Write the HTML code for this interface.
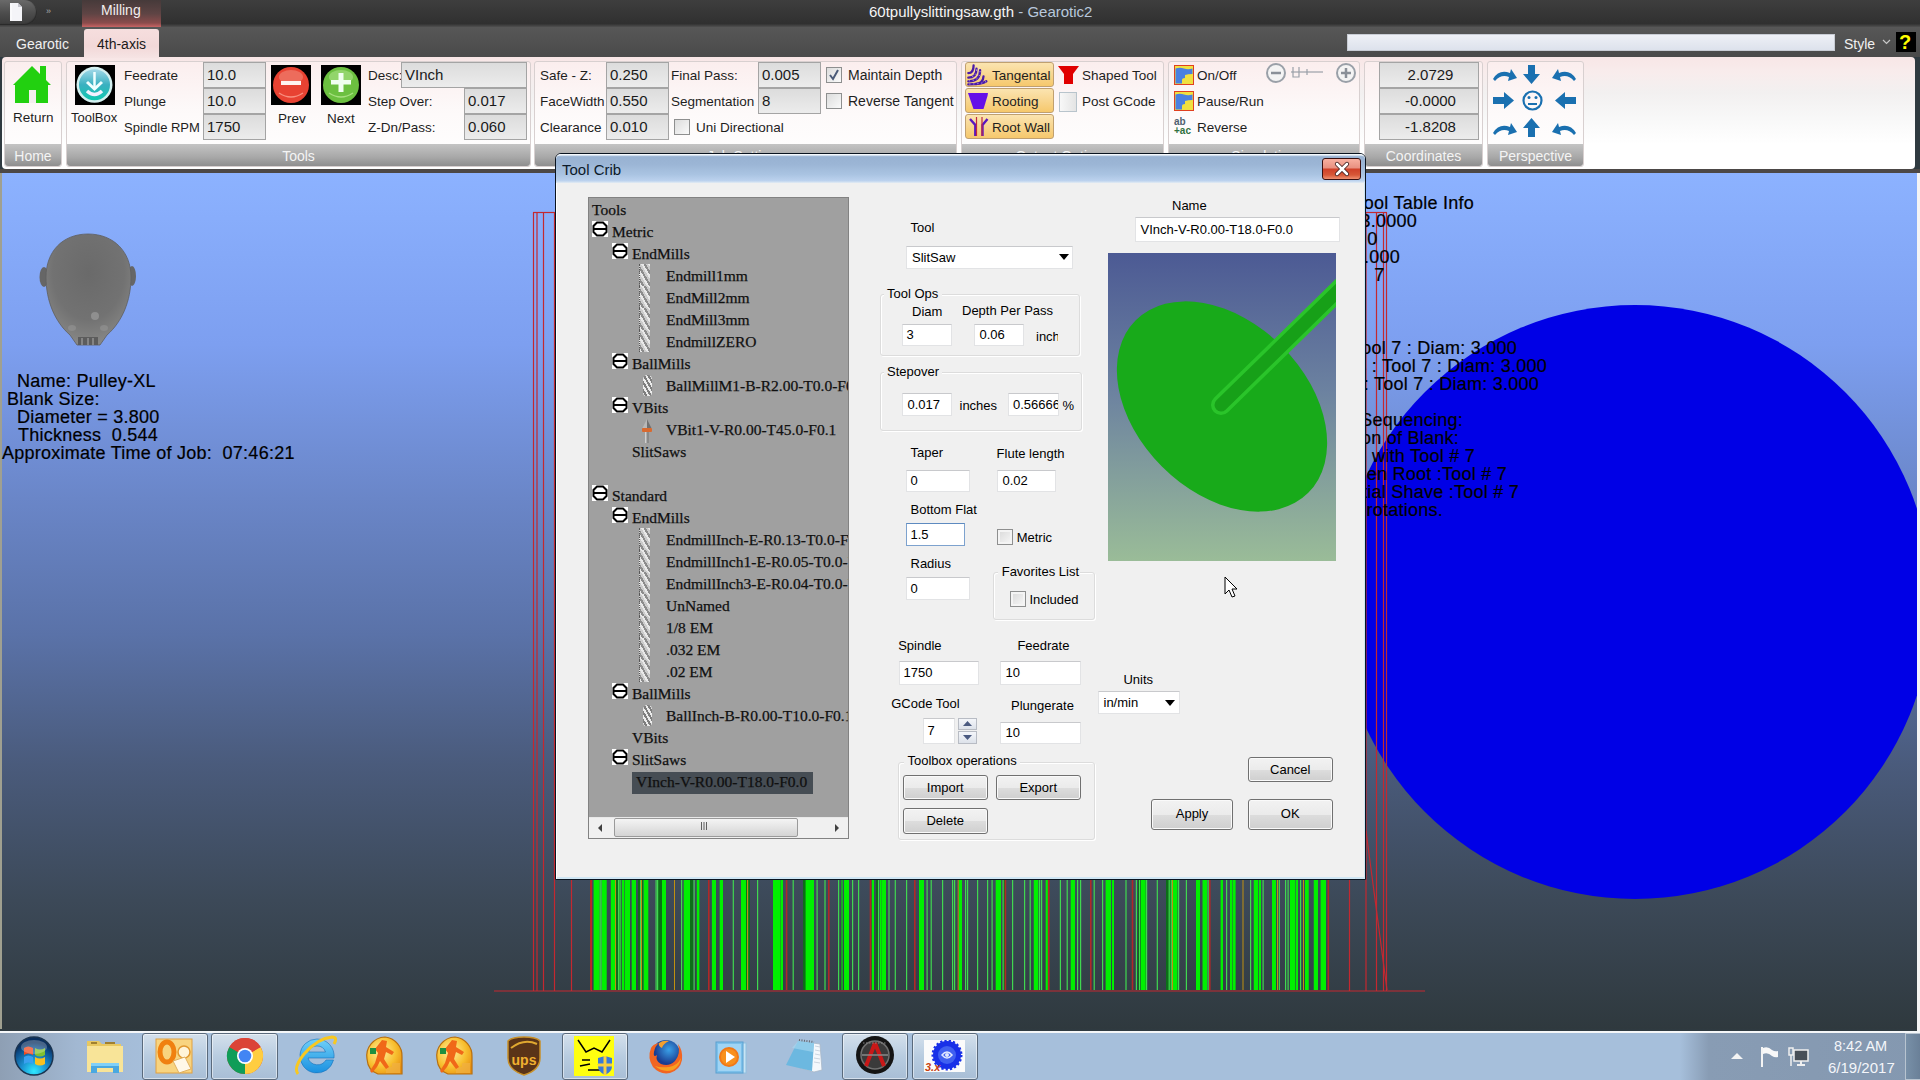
<!DOCTYPE html>
<html><head><meta charset="utf-8">
<style>
*{margin:0;padding:0;box-sizing:border-box}
html,body{width:1920px;height:1080px;overflow:hidden;background:#2f3a40}
body{position:relative;font-family:"Liberation Sans",sans-serif;font-size:14px;color:#1e1e1e}
.a{position:absolute}
.t{position:absolute;white-space:nowrap;line-height:1}
/* title bar */
#titlebar{left:0;top:0;width:1920px;height:27px;background:linear-gradient(#3e3e3e,#303030 88%,#505050)}
#tabrow{left:0;top:27px;width:1920px;height:30px;background:linear-gradient(#575757,#4a4a4a)}
#ribbon{left:2px;top:57px;width:1913px;height:112px;background:linear-gradient(#f8e6e6 0,#f8ecec 14%,#f2f0f0 32%,#f8f8f8 55%,#ffffff 78%);border-radius:4px}
.grp{position:absolute;top:4px;height:106px;border:1px solid #d8d0d0;border-radius:3px;background:linear-gradient(#fbeeee,#fdfafa 50%,#fff)}
.gft{position:absolute;left:0;right:0;bottom:0;height:22px;background:linear-gradient(#c4c4c4,#a8a8a8 60%,#8e8e8e);color:#f4f4f4;font-size:14px;text-align:center;line-height:24px;border-radius:0 0 3px 3px}
.tb{position:absolute;height:26px;border:1px solid #a4a4a4;background:linear-gradient(#dcdcdc,#ececec);font-size:15px;line-height:24px;padding-left:3px;color:#1a1a1a}
#canvas{left:0;top:173px;width:1917px;height:856px;background:linear-gradient(#8cb2ff 0%,#7d9ff0 20%,#6a86c8 38%,#5a72a8 54%,#4a5b7c 69%,#3c4958 85%,#2f393e 100%);border-left:2px solid #a0a090}
#taskbar{left:0;top:1031px;width:1920px;height:49px;background:linear-gradient(90deg,#8e9fb4 0,#a2b8d2 4%,#a6bfdb 8%,#a6bfdb 87.5%,#889cb4 89%,#8498b0 100%);border-top:2px solid #f4f6f8}
</style></head>
<body>
<div id="titlebar" class="a"></div>
<div id="tabrow" class="a"></div>
<div id="ribbon" class="a"></div>

<!-- TITLE -->
<div class="a" style="left:0;top:0;width:37px;height:25px;border-radius:0 13px 13px 0;background:linear-gradient(#6a6a6a,#4e4e4e 50%,#3a3a3a);box-shadow:inset -1px -1px 1px #2a2a2a"></div>
<svg class="a" style="left:8px;top:2px" width="16" height="20" viewBox="0 0 16 20"><path d="M2 1h8l4 4v14H2z" fill="#f4f4f8"/><path d="M10 1v4h4" fill="#c8c8d0"/><path d="M3 2v16" stroke="#fff" stroke-width="1"/></svg>
<div class="t" style="left:46px;top:7px;font-size:9px;color:#aaa;letter-spacing:-1px">»</div>
<div class="a" style="left:82px;top:0;width:79px;height:27px;background:linear-gradient(#463a3a,#5e4444 50%,#8a4c4c 85%,#c86464)"></div>
<div class="t" style="left:101px;top:3px;font-size:14px;color:#f4eeee">Milling</div>
<div class="t" style="left:869px;top:4.3px;font-size:15px;color:#f4f4f4">60tpullyslittingsaw.gth <span style="color:#b8c8dc">- Gearotic2</span></div>
<!-- TABS -->
<div class="t" style="left:16px;top:37px;font-size:14px;color:#f0f0f0">Gearotic</div>
<div class="a" style="left:84px;top:29px;width:75px;height:29px;border-radius:3px 3px 0 0;background:linear-gradient(#f6dede,#f2d8d8 60%,#f6e4e4)"></div>
<div class="t" style="left:97px;top:37px;font-size:14px;color:#1a1a1a">4th-axis</div>
<div class="a" style="left:1347px;top:34px;width:488px;height:17px;background:linear-gradient(#eef0f6,#dde2ec);border:1px solid #c8ccd4"></div>
<div class="t" style="left:1844px;top:37px;font-size:14px;color:#f0f0f0">Style</div>
<svg class="a" style="left:1882px;top:39px" width="9" height="6"><path d="M1 1l3.5 3.5L8 1" stroke="#c8c8c8" stroke-width="1.2" fill="none"/></svg>
<div class="a" style="left:1896px;top:32px;width:20px;height:20px;background:#000"></div>
<div class="t" style="left:1899px;top:32px;font-size:20px;font-weight:bold;color:#ffff00">?</div>

<div class="grp" style="left:4px;top:61px;width:58px;height:106px"><div class="gft">Home</div></div>
<div class="grp" style="left:66px;top:61px;width:465px;height:106px"><div class="gft">Tools</div></div>
<div class="grp" style="left:534px;top:61px;width:423px;height:106px"><div class="gft">Job Settings</div></div>
<div class="grp" style="left:961px;top:61px;width:203px;height:106px"><div class="gft">Output Options</div></div>
<div class="grp" style="left:1168px;top:61px;width:192px;height:106px"><div class="gft">Simulation</div></div>
<div class="grp" style="left:1364px;top:61px;width:119px;height:106px"><div class="gft">Coordinates</div></div>
<div class="grp" style="left:1487px;top:61px;width:97px;height:106px"><div class="gft">Perspective</div></div>
<svg class="a" style="left:12px;top:65px" width="40" height="40" viewBox="0 0 40 40"><path d="M20 1 L1 20 L3 20 L3 38 L36 38 L36 20 L39 20 L34 15 L34 1 L28 1 L28 9 Z" fill="#22d010"/><rect x="17" y="25" width="7" height="13" fill="#f2eeee"/></svg>
<div class="t" style="left:13px;top:110.6px;font-size:13.5px;color:#1e1e1e;">Return</div>
<div class="a" style="left:75px;top:65px;width:40px;height:40px;background:#000"></div><svg class="a" style="left:75px;top:65px" width="40" height="40" viewBox="0 0 40 40"><defs><linearGradient id="tbg" x1="0" y1="0" x2="0" y2="1"><stop offset="0" stop-color="#a0d8e8"/><stop offset=".5" stop-color="#3ab0c0"/><stop offset="1" stop-color="#10c8b0"/></linearGradient></defs><circle cx="19.5" cy="19.8" r="18" fill="#d4f0f0"/><circle cx="19.5" cy="19.8" r="15.5" fill="url(#tbg)"/><path d="M19.5 7V23" stroke="#f0ffff" stroke-width="2.5"/><path d="M12 17L19.5 24L27 17" stroke="#f0ffff" stroke-width="3" fill="none"/><path d="M12 26Q19.5 33 27 26" stroke="#f4f0ff" stroke-width="3.5" fill="none"/></svg>
<div class="t" style="left:71px;top:111.0px;font-size:13px;color:#1e1e1e;">ToolBox</div>
<div class="t" style="left:124px;top:68.6px;font-size:13.5px;color:#1e1e1e;">Feedrate</div>
<div class="t" style="left:124px;top:94.6px;font-size:13.5px;color:#1e1e1e;">Plunge</div>
<div class="t" style="left:124px;top:121.0px;font-size:13px;color:#1e1e1e;">Spindle RPM</div>
<div class="tb" style="left:203px;top:62px;width:63px;height:26px;text-align:left;padding-left:3px;">10.0</div>
<div class="tb" style="left:203px;top:88px;width:63px;height:26px;text-align:left;padding-left:3px;">10.0</div>
<div class="tb" style="left:203px;top:114px;width:63px;height:26px;text-align:left;padding-left:3px;">1750</div>
<div class="a" style="left:271px;top:65px;width:40px;height:40px;background:#000"></div><svg class="a" style="left:271px;top:65px" width="40" height="40" viewBox="0 0 40 40"><circle cx="20" cy="20" r="18" fill="#e84232"/><ellipse cx="20" cy="12" rx="12" ry="7" fill="#f4a090" opacity=".45"/><rect x="10" y="16" width="20" height="4" fill="#fff4f0"/><path d="M8 28q12 8 24 0" stroke="#f89080" stroke-width="1.5" fill="none"/></svg>
<div class="t" style="left:278px;top:111.6px;font-size:13.5px;color:#1e1e1e;">Prev</div>
<div class="a" style="left:321px;top:65px;width:40px;height:40px;background:#000"></div><svg class="a" style="left:321px;top:65px" width="40" height="40" viewBox="0 0 40 40"><circle cx="20" cy="20" r="18" fill="#6cc040"/><ellipse cx="20" cy="12" rx="12" ry="7" fill="#c0f0a0" opacity=".45"/><rect x="10" y="15" width="20" height="4.5" fill="#f0fff0"/><rect x="17.5" y="8" width="5" height="19" fill="#f0fff0"/><path d="M8 28q12 8 24 0" stroke="#a8e080" stroke-width="1.5" fill="none"/></svg>
<div class="t" style="left:327px;top:111.6px;font-size:13.5px;color:#1e1e1e;">Next</div>
<div class="t" style="left:368px;top:68.6px;font-size:13.5px;color:#1e1e1e;">Desc:</div>
<div class="t" style="left:368px;top:94.6px;font-size:13.5px;color:#1e1e1e;">Step Over:</div>
<div class="t" style="left:368px;top:120.6px;font-size:13.5px;color:#1e1e1e;">Z-Dn/Pass:</div>
<div class="tb" style="left:401px;top:62px;width:126px;height:26px;text-align:left;padding-left:3px;">VInch</div>
<div class="tb" style="left:464px;top:88px;width:63px;height:26px;text-align:left;padding-left:3px;">0.017</div>
<div class="tb" style="left:464px;top:114px;width:63px;height:26px;text-align:left;padding-left:3px;">0.060</div>
<div class="t" style="left:540px;top:68.6px;font-size:13.5px;color:#1e1e1e;">Safe - Z:</div>
<div class="t" style="left:540px;top:94.6px;font-size:13.5px;color:#1e1e1e;">FaceWidth</div>
<div class="t" style="left:540px;top:120.6px;font-size:13.5px;color:#1e1e1e;">Clearance</div>
<div class="tb" style="left:606px;top:62px;width:63px;height:26px;text-align:left;padding-left:3px;">0.250</div>
<div class="tb" style="left:606px;top:88px;width:63px;height:26px;text-align:left;padding-left:3px;">0.550</div>
<div class="tb" style="left:606px;top:114px;width:63px;height:26px;text-align:left;padding-left:3px;">0.010</div>
<div class="t" style="left:671px;top:68.6px;font-size:13.5px;color:#1e1e1e;">Final Pass:</div>
<div class="t" style="left:671px;top:94.6px;font-size:13.5px;color:#1e1e1e;">Segmentation</div>
<div class="tb" style="left:758px;top:62px;width:63px;height:26px;text-align:left;padding-left:3px;">0.005</div>
<div class="tb" style="left:758px;top:88px;width:63px;height:26px;text-align:left;padding-left:3px;">8</div>
<div class="a" style="left:674px;top:119px;width:16px;height:16px;border:1px solid #8e8f8f;background:linear-gradient(135deg,#dcdcdc,#fafafa)"></div>
<div class="t" style="left:696px;top:120.6px;font-size:13.5px;color:#1e1e1e;">Uni Directional</div>
<div class="a" style="left:826px;top:67px;width:16px;height:16px;border:1px solid #8e8f8f;background:linear-gradient(135deg,#dcdcdc,#fafafa)"></div><svg class="a" style="left:826px;top:67px" width="16" height="16"><path d="M4 8l3 4 5-9" stroke="#4a5a78" stroke-width="2" fill="none"/></svg>
<div class="t" style="left:848px;top:68.1px;font-size:14px;color:#1e1e1e;">Maintain Depth</div>
<div class="a" style="left:826px;top:93px;width:16px;height:16px;border:1px solid #8e8f8f;background:linear-gradient(135deg,#dcdcdc,#fafafa)"></div>
<div class="t" style="left:848px;top:94.1px;font-size:14px;color:#1e1e1e;">Reverse Tangent</div>
<div class="a" style="left:965px;top:62px;width:89px;height:25px;border:1px solid #c0a070;border-radius:3px;background:linear-gradient(#fbe4b0,#f8d690 50%,#f6c86c)"></div>
<div class="a" style="left:965px;top:88px;width:89px;height:25px;border:1px solid #c0a070;border-radius:3px;background:linear-gradient(#fbe4b0,#f8d690 50%,#f6c86c)"></div>
<div class="a" style="left:965px;top:114px;width:89px;height:25px;border:1px solid #c0a070;border-radius:3px;background:linear-gradient(#fbe4b0,#f8d690 50%,#f6c86c)"></div>
<svg class="a" style="left:962px;top:60px" width="30" height="30" viewBox="0 0 30 30"><g stroke="#4a1aa8" stroke-width="2.3" fill="none" stroke-linecap="round"><path d="M11.6 5.4Q11.6 13.1 6.3 13.1"/><path d="M14.5 8.7Q14.5 17.7 6.3 17.7"/><path d="M18.1 10.2Q18.1 21.3 6.3 21.3"/><path d="M21.5 16.5Q21 23.5 14 24"/><path d="M24.4 21.3Q20 24.4 6.3 24.4"/></g><g stroke="#c8b0f4" stroke-width="0.9" fill="none" stroke-dasharray="1.2 2.8"><path d="M14.5 9.5Q14.5 17.2 7 17.2"/><path d="M18.1 11Q18.1 20.8 7 20.8"/><path d="M24 21.5Q20 24 7 24"/></g></svg><div class="t" style="left:992px;top:68.6px;font-size:13.5px;color:#1e1e1e;">Tangental</div>
<svg class="a" style="left:962px;top:88px" width="30" height="26" viewBox="0 0 30 26"><path d="M6 5H26L25.5 8L21.5 21H11.5L7 8Z" fill="#6410e8"/></svg><div class="t" style="left:992px;top:94.6px;font-size:13.5px;color:#1e1e1e;">Rooting</div>
<svg class="a" style="left:962px;top:114px" width="30" height="26" viewBox="0 0 30 26"><g stroke="#5a18c0" stroke-width="2.4" fill="none"><path d="M8 5L13.3 11V22"/><path d="M25.5 5L20.5 11V22"/></g><path d="M14.5 3V22M20 3V22" stroke="#c02840" stroke-width="1.2"/></svg><div class="t" style="left:992px;top:120.6px;font-size:13.5px;color:#1e1e1e;">Root Wall</div>
<svg class="a" style="left:1058px;top:65px" width="21" height="20" viewBox="0 0 21 20"><path d="M0 1h21l-6 8v10H6V9z" fill="#e00000"/></svg><div class="t" style="left:1082px;top:68.6px;font-size:13.5px;color:#1e1e1e;">Shaped Tool</div>
<div class="a" style="left:1059px;top:92px;width:18px;height:20px;border:1px solid #b8c4cc;background:linear-gradient(90deg,#f8f8f8,#e4e4e4)"></div><div class="t" style="left:1082px;top:94.6px;font-size:13.5px;color:#1e1e1e;">Post GCode</div>
<svg class="a" style="left:1174px;top:65px" width="20" height="20" viewBox="0 0 20 20"><rect x="0.5" y="0.5" width="19" height="19" fill="#f0e040" stroke="#e04020"/><path d="M1.5 3.5Q6 2 10 3.5T18.5 3.5V9Q14 9 11 10V13Q8 13 8 15V18.5H1.5Z" fill="#4a80e0"/></svg>
<div class="t" style="left:1197px;top:68.6px;font-size:13.5px;color:#1e1e1e;">On/Off</div>
<svg class="a" style="left:1174px;top:91px" width="20" height="20" viewBox="0 0 20 20"><rect x="0.5" y="0.5" width="19" height="19" fill="#f0e040" stroke="#e04020"/><path d="M1.5 3.5Q6 2 10 3.5T18.5 3.5V9Q14 9 11 10V13Q8 13 8 15V18.5H1.5Z" fill="#4a80e0"/></svg>
<div class="t" style="left:1197px;top:94.6px;font-size:13.5px;color:#1e1e1e;">Pause/Run</div>
<div class="t" style="left:1174px;top:117px;font-size:10px;color:#506070;font-weight:bold;line-height:9px">ab<br><span style="color:#307040">+ac</span></div><div class="t" style="left:1197px;top:120.6px;font-size:13.5px;color:#1e1e1e;">Reverse</div>
<svg class="a" style="left:1264px;top:61px" width="95" height="24" viewBox="0 0 95 24"><circle cx="12" cy="12" r="9" fill="#f4f4f4" stroke="#9aa0a8" stroke-width="2"/><path d="M7 12h10" stroke="#8a9098" stroke-width="2.5"/><circle cx="82" cy="12" r="9" fill="#f4f4f4" stroke="#9aa0a8" stroke-width="2"/><path d="M77 12h10M82 7v10" stroke="#8a9098" stroke-width="2.5"/><path d="M27 11h32" stroke="#9aa0a8" stroke-width="1.2"/><path d="M29 6v10h6V6M43 8v6" stroke="#9aa0a8" stroke-width="1.2" fill="none"/></svg><div class="tb" style="left:1379px;top:62px;width:100px;height:26px;text-align:center;">2.0729</div>
<div class="tb" style="left:1379px;top:88px;width:100px;height:26px;text-align:center;">-0.0000</div>
<div class="tb" style="left:1379px;top:114px;width:100px;height:26px;text-align:center;">-1.8208</div>
<svg class="a" style="left:1490px;top:62px" width="90" height="80" viewBox="0 0 90 80"><g fill="#1a70b0"><path d="M3 17q6-10 17-6l1-4 6 9-9 3 1-4q-8-3-14 4z"/><path d="M38 3h7v9h5l-8.5 10-8.5-10h5z"/><path d="M86 17q-6-10-17-6l-1-4-6 9 9 3-1-4q8-3 14 4z"/><path d="M3 35h11v-5l10 8.5-10 8.5v-5H3z"/><path d="M86 35H75v-5l-10 8.5 10 8.5v-5h11z"/><path d="M3 71q6-10 17-6l1-4 6 9-9 3 1-4q-8-3-14 4z"/><path d="M38 75h7v-9h5l-8.5-10-8.5 10h5z"/><path d="M86 71q-6-10-17-6l-1-4-6 9 9 3-1-4q8-3 14 4z"/></g><circle cx="42.5" cy="38.5" r="9" fill="none" stroke="#1a70b0" stroke-width="2.2"/><circle cx="39" cy="35.5" r="1.5" fill="#1a70b0"/><circle cx="46" cy="35.5" r="1.5" fill="#1a70b0"/><path d="M38 42h9" stroke="#1a70b0" stroke-width="2"/></svg>
<div class="a" style="left:0;top:169px;width:1920px;height:4px;background:#4c4846"></div>
<div id="canvas" class="a"></div>
<svg class="a" style="left:0;top:173px" width="1917" height="856" viewBox="0 173 1917 856"><circle cx="1635" cy="602" r="297" fill="#0000e6"/></svg>
<div class="a" style="left:1917px;top:173px;width:3px;height:858px;background:#f4f4f4"></div>
<svg class="a" style="left:0;top:173px" width="300" height="200" viewBox="0 173 300 200">
<defs><radialGradient id="hg" cx="0.5" cy="0.35" r="0.7"><stop offset="0" stop-color="#6a6a6a"/><stop offset="0.6" stop-color="#727272"/><stop offset="1" stop-color="#8c8c8a"/></radialGradient></defs>
<ellipse cx="44" cy="277" rx="4.5" ry="10" fill="#666"/><ellipse cx="132" cy="276" rx="4" ry="10" fill="#666"/>
<path d="M88 234 C114 234 131 252 131 277 C131 301 122 322 107 335 L100 345 L77 345 L70 335 C55 322 46 301 46 277 C46 252 62 234 88 234 Z" fill="url(#hg)" stroke="#5e5e5e" stroke-width="0.8"/>
<ellipse cx="95" cy="316" rx="4" ry="4" fill="#a4a4a4" opacity=".6"/><ellipse cx="72" cy="328" rx="4" ry="3" fill="#9a9a9a" opacity=".5"/><ellipse cx="104" cy="328" rx="4" ry="3" fill="#9a9a9a" opacity=".5"/><rect x="78" y="337" width="20" height="8" fill="#5c5c5c"/><path d="M82 338v7M88 338v7M93 338v7" stroke="#a0a0a0" stroke-width="1.2"/>
</svg>
<div class="t" style="left:17px;top:372.3px;font-size:18px;color:#000;-webkit-text-stroke:0.2px #000;letter-spacing:0.25px;">Name: Pulley-XL</div>
<div class="t" style="left:7px;top:390.3px;font-size:18px;color:#000;-webkit-text-stroke:0.2px #000;letter-spacing:0.25px;">Blank Size:</div>
<div class="t" style="left:17px;top:408.3px;font-size:18px;color:#000;-webkit-text-stroke:0.2px #000;letter-spacing:0.25px;">Diameter = 3.800</div>
<div class="t" style="left:18px;top:426.3px;font-size:18px;color:#000;-webkit-text-stroke:0.2px #000;letter-spacing:0.25px;">Thickness&nbsp; 0.544</div>
<div class="t" style="left:2px;top:443.8px;font-size:18px;color:#000;-webkit-text-stroke:0.2px #000;letter-spacing:0.25px;">Approximate Time of Job:&nbsp; 07:46:21</div>
<svg class="a" style="left:0;top:0" width="1920" height="1080" viewBox="0 0 1920 1080"><g stroke="#c42830" stroke-width="1.2" fill="none"><path d="M533.5 212.5V991"/><path d="M537 212.5V991"/><path d="M543.5 212.5V991"/><path d="M554.5 212.5V991"/><path d="M533 212.5H560"/><path d="M1349.5 212.5V991"/><path d="M1366 212.5V991"/><path d="M1376.5 212.5V991"/><path d="M1383.5 212.5V991"/><path d="M1386.5 212.5V991"/><path d="M1360 212.5H1387"/><path d="M494 991H1425"/><path d="M571.5 880V991"/><path d="M591.5 880V991"/><path d="M1366 831L1387 990"/></g></svg>
<svg class="a" style="left:0;top:0" width="1920" height="1080" viewBox="0 0 1920 1080"><rect x="599" y="880" width="2.5" height="110" fill="#0c6e18"/><rect x="615.5" y="880" width="5.5" height="110" fill="#0c6e18"/><rect x="638" y="880" width="5" height="110" fill="#0c6e18"/><rect x="657" y="880" width="5" height="110" fill="#0c6e18"/><rect x="690" y="880" width="3" height="110" fill="#0c6e18"/><rect x="746" y="880" width="4" height="110" fill="#0c6e18"/><rect x="803" y="880" width="3" height="110" fill="#0c6e18"/><rect x="876" y="880" width="3" height="110" fill="#0c6e18"/><rect x="1003" y="880" width="2" height="110" fill="#0c6e18"/><rect x="1138" y="880" width="3" height="110" fill="#0c6e18"/><rect x="1166" y="880" width="6" height="110" fill="#0c6e18"/><rect x="593.6" y="880" width="5.7999999999999545" height="110" fill="#00f000"/><rect x="602" y="880" width="4.7000000000000455" height="110" fill="#00f000"/><rect x="610.8" y="880" width="4.2000000000000455" height="110" fill="#00f000"/><rect x="621.8" y="880" width="2.6000000000000227" height="110" fill="#00f000"/><rect x="625" y="880" width="5" height="110" fill="#00f000"/><rect x="631.7" y="880" width="4.2999999999999545" height="110" fill="#00f000"/><rect x="643.6" y="880" width="4.699999999999932" height="110" fill="#00f000"/><rect x="662" y="880" width="4" height="110" fill="#00f000"/><rect x="683.7" y="880" width="6.2999999999999545" height="110" fill="#00f000"/><rect x="696.8" y="880" width="2.6000000000000227" height="110" fill="#00f000"/><rect x="711.9" y="880" width="4.100000000000023" height="110" fill="#00f000"/><rect x="719.7" y="880" width="3.2999999999999545" height="110" fill="#00f000"/><rect x="741" y="880" width="5" height="110" fill="#00f000"/><rect x="773" y="880" width="7.600000000000023" height="110" fill="#00f000"/><rect x="781" y="880" width="2" height="110" fill="#00f000"/><rect x="805.6" y="880" width="8.399999999999977" height="110" fill="#00f000"/><rect x="841.5" y="880" width="1.1000000000000227" height="110" fill="#00f000"/><rect x="844" y="880" width="5" height="110" fill="#00f000"/><rect x="871.8" y="880" width="2.2000000000000455" height="110" fill="#00f000"/><rect x="880" y="880" width="1.7000000000000455" height="110" fill="#00f000"/><rect x="882" y="880" width="4" height="110" fill="#00f000"/><rect x="919" y="880" width="5" height="110" fill="#00f000"/><rect x="959" y="880" width="3" height="110" fill="#00f000"/><rect x="995.7" y="880" width="5.2999999999999545" height="110" fill="#00f000"/><rect x="1033.75" y="880" width="4.650000000000091" height="110" fill="#00f000"/><rect x="1045.7" y="880" width="2.099999999999909" height="110" fill="#00f000"/><rect x="1070.7" y="880" width="4.2999999999999545" height="110" fill="#00f000"/><rect x="1105.6" y="880" width="5.400000000000091" height="110" fill="#00f000"/><rect x="1112" y="880" width="2" height="110" fill="#00f000"/><rect x="1141" y="880" width="4.7000000000000455" height="110" fill="#00f000"/><rect x="1173" y="880" width="4.5" height="110" fill="#00f000"/><rect x="1196" y="880" width="4" height="110" fill="#00f000"/><rect x="1202.5" y="880" width="4.5" height="110" fill="#00f000"/><rect x="1220.6" y="880" width="2.400000000000091" height="110" fill="#00f000"/><rect x="1230" y="880" width="2.5" height="110" fill="#00f000"/><rect x="1233" y="880" width="2.599999999999909" height="110" fill="#00f000"/><rect x="1253.75" y="880" width="4.25" height="110" fill="#00f000"/><rect x="1258.75" y="880" width="2.25" height="110" fill="#00f000"/><rect x="1272" y="880" width="4" height="110" fill="#00f000"/><rect x="1290" y="880" width="5" height="110" fill="#00f000"/><rect x="1295.6" y="880" width="2.400000000000091" height="110" fill="#00f000"/><rect x="1305" y="880" width="3.75" height="110" fill="#00f000"/><rect x="1313.75" y="880" width="4.25" height="110" fill="#00f000"/><rect x="1320.6" y="880" width="5.400000000000091" height="110" fill="#00f000"/><rect x="599.5" y="880" width="1.2" height="110" fill="#40d850"/><rect x="600.5" y="880" width="1.2" height="110" fill="#40d850"/><rect x="618" y="880" width="1.2" height="110" fill="#40d850"/><rect x="619.5" y="880" width="1.2" height="110" fill="#40d850"/><rect x="640" y="880" width="1.2" height="110" fill="#40d850"/><rect x="655.5" y="880" width="1.2" height="110" fill="#40d850"/><rect x="657" y="880" width="1.2" height="110" fill="#40d850"/><rect x="681" y="880" width="1.2" height="110" fill="#40d850"/><rect x="693.5" y="880" width="1.2" height="110" fill="#40d850"/><rect x="732.7" y="880" width="1.2" height="110" fill="#40d850"/><rect x="747" y="880" width="1.2" height="110" fill="#40d850"/><rect x="757" y="880" width="1.2" height="110" fill="#40d850"/><rect x="792.6" y="880" width="1.2" height="110" fill="#40d850"/><rect x="816.5" y="880" width="1.2" height="110" fill="#40d850"/><rect x="824.4" y="880" width="1.2" height="110" fill="#40d850"/><rect x="838" y="880" width="1.2" height="110" fill="#40d850"/><rect x="852" y="880" width="1.2" height="110" fill="#40d850"/><rect x="858" y="880" width="1.2" height="110" fill="#40d850"/><rect x="878" y="880" width="1.2" height="110" fill="#40d850"/><rect x="888.4" y="880" width="1.2" height="110" fill="#40d850"/><rect x="894.7" y="880" width="1.2" height="110" fill="#40d850"/><rect x="906" y="880" width="1.2" height="110" fill="#40d850"/><rect x="926.5" y="880" width="1.2" height="110" fill="#40d850"/><rect x="930.6" y="880" width="1.2" height="110" fill="#40d850"/><rect x="942" y="880" width="1.2" height="110" fill="#40d850"/><rect x="952" y="880" width="1.2" height="110" fill="#40d850"/><rect x="954" y="880" width="1.2" height="110" fill="#40d850"/><rect x="965" y="880" width="1.2" height="110" fill="#40d850"/><rect x="967" y="880" width="1.2" height="110" fill="#40d850"/><rect x="977" y="880" width="1.2" height="110" fill="#40d850"/><rect x="987" y="880" width="1.2" height="110" fill="#40d850"/><rect x="991.5" y="880" width="1.2" height="110" fill="#40d850"/><rect x="1002.5" y="880" width="1.2" height="110" fill="#40d850"/><rect x="1012" y="880" width="1.2" height="110" fill="#40d850"/><rect x="1024" y="880" width="1.2" height="110" fill="#40d850"/><rect x="1029.6" y="880" width="1.2" height="110" fill="#40d850"/><rect x="1039" y="880" width="1.2" height="110" fill="#40d850"/><rect x="1041" y="880" width="1.2" height="110" fill="#40d850"/><rect x="1059.8" y="880" width="1.2" height="110" fill="#40d850"/><rect x="1066.6" y="880" width="1.2" height="110" fill="#40d850"/><rect x="1077" y="880" width="1.2" height="110" fill="#40d850"/><rect x="1080" y="880" width="1.2" height="110" fill="#40d850"/><rect x="1093.6" y="880" width="1.2" height="110" fill="#40d850"/><rect x="1102" y="880" width="1.2" height="110" fill="#40d850"/><rect x="1125.4" y="880" width="1.2" height="110" fill="#40d850"/><rect x="1135.8" y="880" width="1.2" height="110" fill="#40d850"/><rect x="1139" y="880" width="1.2" height="110" fill="#40d850"/><rect x="1146" y="880" width="1.2" height="110" fill="#40d850"/><rect x="1156.7" y="880" width="1.2" height="110" fill="#40d850"/><rect x="1168.6" y="880" width="1.2" height="110" fill="#40d850"/><rect x="1170.7" y="880" width="1.2" height="110" fill="#40d850"/><rect x="1178" y="880" width="1.2" height="110" fill="#40d850"/><rect x="1185.8" y="880" width="1.2" height="110" fill="#40d850"/><rect x="1207.5" y="880" width="1.2" height="110" fill="#40d850"/><rect x="1226" y="880" width="1.2" height="110" fill="#40d850"/><rect x="1250" y="880" width="1.2" height="110" fill="#40d850"/><rect x="1262.5" y="880" width="1.2" height="110" fill="#40d850"/><rect x="1278.75" y="880" width="1.2" height="110" fill="#40d850"/><rect x="1285" y="880" width="1.2" height="110" fill="#40d850"/><rect x="1287.5" y="880" width="1.2" height="110" fill="#40d850"/><rect x="1300" y="880" width="1.2" height="110" fill="#40d850"/><rect x="590" y="880" width="1.6" height="110" fill="#b02828"/><rect x="708" y="880" width="1.6" height="110" fill="#b02828"/><rect x="785.8" y="880" width="1.6" height="110" fill="#b02828"/><rect x="828" y="880" width="1.6" height="110" fill="#b02828"/><rect x="869.7" y="880" width="1.6" height="110" fill="#b02828"/><rect x="914" y="880" width="1.6" height="110" fill="#b02828"/><rect x="1004.6" y="880" width="1.6" height="110" fill="#b02828"/><rect x="1048" y="880" width="1.6" height="110" fill="#b02828"/><rect x="1090" y="880" width="1.6" height="110" fill="#b02828"/><rect x="1131.7" y="880" width="1.6" height="110" fill="#b02828"/><rect x="1209" y="880" width="1.6" height="110" fill="#b02828"/><rect x="1327.5" y="880" width="1.6" height="110" fill="#b02828"/><rect x="615" y="880" width="1" height="110" fill="#c09010"/><rect x="641" y="880" width="1" height="110" fill="#c09010"/><rect x="674" y="880" width="1" height="110" fill="#c09010"/><rect x="747" y="880" width="1" height="110" fill="#c09010"/><rect x="957.7" y="880" width="1" height="110" fill="#c09010"/><rect x="1172" y="880" width="1" height="110" fill="#c09010"/><rect x="1242.5" y="880" width="1" height="110" fill="#c09010"/><rect x="1277" y="880" width="1" height="110" fill="#c09010"/><rect x="1303" y="880" width="1" height="110" fill="#c09010"/></svg>
<div class="t" style="right:446px;top:194.4px;font-size:18px;color:#000;-webkit-text-stroke:0.2px #000;letter-spacing:0.25px;">Tool Table Info</div>
<div class="t" style="right:503px;top:212.3px;font-size:18px;color:#000;-webkit-text-stroke:0.2px #000;letter-spacing:0.25px;">Diameter: 3.0000</div>
<div class="t" style="right:542.5px;top:230.3px;font-size:18px;color:#000;-webkit-text-stroke:0.2px #000;letter-spacing:0.25px;">Flutes: 0</div>
<div class="t" style="right:520px;top:248.1px;font-size:18px;color:#000;-webkit-text-stroke:0.2px #000;letter-spacing:0.25px;">Length: 1.000</div>
<div class="t" style="right:535.5px;top:266.1px;font-size:18px;color:#000;-webkit-text-stroke:0.2px #000;letter-spacing:0.25px;">Tool Num:&nbsp;&nbsp; 7</div>
<div class="t" style="right:403px;top:338.8px;font-size:18px;color:#000;-webkit-text-stroke:0.2px #000;letter-spacing:0.25px;">Finish: Tool 7 : Diam: 3.000</div>
<div class="t" style="right:373px;top:356.8px;font-size:18px;color:#000;-webkit-text-stroke:0.2px #000;letter-spacing:0.25px;">Roughs : Tool 7 : Diam: 3.000</div>
<div class="t" style="right:381px;top:374.8px;font-size:18px;color:#000;-webkit-text-stroke:0.2px #000;letter-spacing:0.25px;">Root : Tool 7 : Diam: 3.000</div>
<div class="t" style="right:457px;top:410.8px;font-size:18px;color:#000;-webkit-text-stroke:0.2px #000;letter-spacing:0.25px;">Cutting Sequencing:</div>
<div class="t" style="right:461px;top:428.8px;font-size:18px;color:#000;-webkit-text-stroke:0.2px #000;letter-spacing:0.25px;">Rotation of Blank:</div>
<div class="t" style="right:445px;top:446.8px;font-size:18px;color:#000;-webkit-text-stroke:0.2px #000;letter-spacing:0.25px;">Rough with Tool # 7</div>
<div class="t" style="right:413px;top:464.8px;font-size:18px;color:#000;-webkit-text-stroke:0.2px #000;letter-spacing:0.25px;">Widen Root :Tool # 7</div>
<div class="t" style="right:401px;top:482.8px;font-size:18px;color:#000;-webkit-text-stroke:0.2px #000;letter-spacing:0.25px;">Tangential Shave :Tool # 7</div>
<div class="t" style="right:477px;top:500.8px;font-size:18px;color:#000;-webkit-text-stroke:0.2px #000;letter-spacing:0.25px;">360 rotations.</div>

<div id="dlg" class="a" style="left:555px;top:153px;width:811px;height:727px;border:1px solid #0a1420;border-radius:6px 6px 0 0;background:#f0f0f0;box-shadow:inset 1px 0 0 #fff, inset -1px 0 0 #cfe6f4, inset 0 -2px 0 #cfe6f4"></div>
<div class="a" style="left:556px;top:154px;width:809px;height:29px;border-radius:5px 5px 0 0;background:linear-gradient(#e8f0f8 0,#98b2d2 6%,#9cb6d6 35%,#aac4e2 70%,#bcd2ee 92%,#e4ecf4 100%);border-top:1px solid #f4f8fc"></div>
<div class="t" style="left:562px;top:161.8px;font-size:15px;color:#0c1a2a;">Tool Crib</div>
<div class="a" style="left:1322px;top:158px;width:39px;height:22px;border:1px solid #3a1010;border-radius:3px;background:linear-gradient(#f8b0a0 0,#e89080 45%,#d04028 50%,#d85838 80%,#f09070 100%)"></div><svg class="a" style="left:1332px;top:161px" width="20" height="16" viewBox="0 0 20 16"><path d="M5 3l10 10M15 3L5 13" stroke="#3a1818" stroke-width="4.2" stroke-linecap="round"/><path d="M5 3l10 10M15 3L5 13" stroke="#fff" stroke-width="2.6" stroke-linecap="round"/></svg>
<div class="a" style="left:588px;top:197px;width:261px;height:642px;background:#a0a0a0;border:1px solid #828282;overflow:hidden"><div class="t" style="left:3px;top:3.5px;font-size:15.5px;font-family:'Liberation Serif',serif;color:#101010;-webkit-text-stroke:0.25px #101010">Tools</div><svg class="a" style="left:3px;top:23.2px" width="16" height="16" viewBox="0 0 16 16"><rect width="16" height="16" fill="#fff"/><path d="M5 1.5h6l3.5 3.5v6L11 14.5H5L1.5 11V5z" fill="none" stroke="#000" stroke-width="2"/><path d="M2 8h12" stroke="#000" stroke-width="2"/></svg><div class="t" style="left:23px;top:25.6px;font-size:15.5px;font-family:'Liberation Serif',serif;color:#101010;-webkit-text-stroke:0.25px #101010">Metric</div><svg class="a" style="left:23px;top:45.1px" width="16" height="16" viewBox="0 0 16 16"><rect width="16" height="16" fill="#fff"/><path d="M5 1.5h6l3.5 3.5v6L11 14.5H5L1.5 11V5z" fill="none" stroke="#000" stroke-width="2"/><path d="M2 8h12" stroke="#000" stroke-width="2"/></svg><div class="t" style="left:43px;top:47.5px;font-size:15.5px;font-family:'Liberation Serif',serif;color:#101010;-webkit-text-stroke:0.25px #101010">EndMills</div><div class="a" style="left:50px;top:65.6px;width:11px;height:22px;background:repeating-linear-gradient(60deg,#f0f0f0 0 2px,#8a8a8a 2px 4px,#d0d0d0 4px 6px);border-left:1px dotted #505050;opacity:.9"></div><div class="t" style="left:77px;top:69.5px;font-size:15.5px;font-family:'Liberation Serif',serif;color:#101010;-webkit-text-stroke:0.25px #101010">Endmill1mm</div><div class="a" style="left:50px;top:87.6px;width:11px;height:22px;background:repeating-linear-gradient(60deg,#f0f0f0 0 2px,#8a8a8a 2px 4px,#d0d0d0 4px 6px);border-left:1px dotted #505050;opacity:.9"></div><div class="t" style="left:77px;top:91.5px;font-size:15.5px;font-family:'Liberation Serif',serif;color:#101010;-webkit-text-stroke:0.25px #101010">EndMill2mm</div><div class="a" style="left:50px;top:109.6px;width:11px;height:22px;background:repeating-linear-gradient(60deg,#f0f0f0 0 2px,#8a8a8a 2px 4px,#d0d0d0 4px 6px);border-left:1px dotted #505050;opacity:.9"></div><div class="t" style="left:77px;top:113.5px;font-size:15.5px;font-family:'Liberation Serif',serif;color:#101010;-webkit-text-stroke:0.25px #101010">EndMill3mm</div><div class="a" style="left:50px;top:131.6px;width:11px;height:22px;background:repeating-linear-gradient(60deg,#f0f0f0 0 2px,#8a8a8a 2px 4px,#d0d0d0 4px 6px);border-left:1px dotted #505050;opacity:.9"></div><div class="t" style="left:77px;top:135.5px;font-size:15.5px;font-family:'Liberation Serif',serif;color:#101010;-webkit-text-stroke:0.25px #101010">EndmillZERO</div><svg class="a" style="left:23px;top:155.1px" width="16" height="16" viewBox="0 0 16 16"><rect width="16" height="16" fill="#fff"/><path d="M5 1.5h6l3.5 3.5v6L11 14.5H5L1.5 11V5z" fill="none" stroke="#000" stroke-width="2"/><path d="M2 8h12" stroke="#000" stroke-width="2"/></svg><div class="t" style="left:43px;top:157.5px;font-size:15.5px;font-family:'Liberation Serif',serif;color:#101010;-webkit-text-stroke:0.25px #101010">BallMills</div><div class="a" style="left:54px;top:176.6px;width:9px;height:21px;border-radius:5px 5px 4px 4px;background:repeating-linear-gradient(60deg,#f4f4f4 0 2px,#7a7a7a 2px 4px);opacity:.9"></div><div class="t" style="left:77px;top:179.5px;font-size:15.5px;font-family:'Liberation Serif',serif;color:#101010;-webkit-text-stroke:0.25px #101010">BallMillM1-B-R2.00-T0.0-F0.1</div><svg class="a" style="left:23px;top:199.1px" width="16" height="16" viewBox="0 0 16 16"><rect width="16" height="16" fill="#fff"/><path d="M5 1.5h6l3.5 3.5v6L11 14.5H5L1.5 11V5z" fill="none" stroke="#000" stroke-width="2"/><path d="M2 8h12" stroke="#000" stroke-width="2"/></svg><div class="t" style="left:43px;top:201.5px;font-size:15.5px;font-family:'Liberation Serif',serif;color:#101010;-webkit-text-stroke:0.25px #101010">VBits</div><svg class="a" style="left:52px;top:220.5px" width="12" height="24" viewBox="0 0 12 24"><path d="M6 0L10.5 9H1.5z" fill="#b8b8b8"/><path d="M6 0L10.5 9H6z" fill="#707070"/><rect x="1" y="9" width="10" height="4" rx="1" fill="#d86a30"/><rect x="4" y="13" width="4" height="11" fill="#8a8a8a"/><rect x="4" y="13" width="1.5" height="11" fill="#d0d0d0"/></svg><div class="t" style="left:77px;top:223.5px;font-size:15.5px;font-family:'Liberation Serif',serif;color:#101010;-webkit-text-stroke:0.25px #101010">VBit1-V-R0.00-T45.0-F0.1</div><div class="t" style="left:43px;top:245.5px;font-size:15.5px;font-family:'Liberation Serif',serif;color:#101010;-webkit-text-stroke:0.25px #101010">SlitSaws</div><svg class="a" style="left:3px;top:287.1px" width="16" height="16" viewBox="0 0 16 16"><rect width="16" height="16" fill="#fff"/><path d="M5 1.5h6l3.5 3.5v6L11 14.5H5L1.5 11V5z" fill="none" stroke="#000" stroke-width="2"/><path d="M2 8h12" stroke="#000" stroke-width="2"/></svg><div class="t" style="left:23px;top:289.5px;font-size:15.5px;font-family:'Liberation Serif',serif;color:#101010;-webkit-text-stroke:0.25px #101010">Standard</div><svg class="a" style="left:23px;top:309.1px" width="16" height="16" viewBox="0 0 16 16"><rect width="16" height="16" fill="#fff"/><path d="M5 1.5h6l3.5 3.5v6L11 14.5H5L1.5 11V5z" fill="none" stroke="#000" stroke-width="2"/><path d="M2 8h12" stroke="#000" stroke-width="2"/></svg><div class="t" style="left:43px;top:311.5px;font-size:15.5px;font-family:'Liberation Serif',serif;color:#101010;-webkit-text-stroke:0.25px #101010">EndMills</div><div class="a" style="left:50px;top:329.6px;width:11px;height:22px;background:repeating-linear-gradient(60deg,#f0f0f0 0 2px,#8a8a8a 2px 4px,#d0d0d0 4px 6px);border-left:1px dotted #505050;opacity:.9"></div><div class="t" style="left:77px;top:333.5px;font-size:15.5px;font-family:'Liberation Serif',serif;color:#101010;-webkit-text-stroke:0.25px #101010">EndmillInch-E-R0.13-T0.0-F0.1</div><div class="a" style="left:50px;top:351.6px;width:11px;height:22px;background:repeating-linear-gradient(60deg,#f0f0f0 0 2px,#8a8a8a 2px 4px,#d0d0d0 4px 6px);border-left:1px dotted #505050;opacity:.9"></div><div class="t" style="left:77px;top:355.5px;font-size:15.5px;font-family:'Liberation Serif',serif;color:#101010;-webkit-text-stroke:0.25px #101010">EndmillInch1-E-R0.05-T0.0-F0</div><div class="a" style="left:50px;top:373.6px;width:11px;height:22px;background:repeating-linear-gradient(60deg,#f0f0f0 0 2px,#8a8a8a 2px 4px,#d0d0d0 4px 6px);border-left:1px dotted #505050;opacity:.9"></div><div class="t" style="left:77px;top:377.5px;font-size:15.5px;font-family:'Liberation Serif',serif;color:#101010;-webkit-text-stroke:0.25px #101010">EndmillInch3-E-R0.04-T0.0-F0</div><div class="a" style="left:50px;top:395.6px;width:11px;height:22px;background:repeating-linear-gradient(60deg,#f0f0f0 0 2px,#8a8a8a 2px 4px,#d0d0d0 4px 6px);border-left:1px dotted #505050;opacity:.9"></div><div class="t" style="left:77px;top:399.5px;font-size:15.5px;font-family:'Liberation Serif',serif;color:#101010;-webkit-text-stroke:0.25px #101010">UnNamed</div><div class="a" style="left:50px;top:417.6px;width:11px;height:22px;background:repeating-linear-gradient(60deg,#f0f0f0 0 2px,#8a8a8a 2px 4px,#d0d0d0 4px 6px);border-left:1px dotted #505050;opacity:.9"></div><div class="t" style="left:77px;top:421.5px;font-size:15.5px;font-family:'Liberation Serif',serif;color:#101010;-webkit-text-stroke:0.25px #101010">1/8 EM</div><div class="a" style="left:50px;top:439.6px;width:11px;height:22px;background:repeating-linear-gradient(60deg,#f0f0f0 0 2px,#8a8a8a 2px 4px,#d0d0d0 4px 6px);border-left:1px dotted #505050;opacity:.9"></div><div class="t" style="left:77px;top:443.5px;font-size:15.5px;font-family:'Liberation Serif',serif;color:#101010;-webkit-text-stroke:0.25px #101010">.032 EM</div><div class="a" style="left:50px;top:461.6px;width:11px;height:22px;background:repeating-linear-gradient(60deg,#f0f0f0 0 2px,#8a8a8a 2px 4px,#d0d0d0 4px 6px);border-left:1px dotted #505050;opacity:.9"></div><div class="t" style="left:77px;top:465.5px;font-size:15.5px;font-family:'Liberation Serif',serif;color:#101010;-webkit-text-stroke:0.25px #101010">.02 EM</div><svg class="a" style="left:23px;top:485.1px" width="16" height="16" viewBox="0 0 16 16"><rect width="16" height="16" fill="#fff"/><path d="M5 1.5h6l3.5 3.5v6L11 14.5H5L1.5 11V5z" fill="none" stroke="#000" stroke-width="2"/><path d="M2 8h12" stroke="#000" stroke-width="2"/></svg><div class="t" style="left:43px;top:487.5px;font-size:15.5px;font-family:'Liberation Serif',serif;color:#101010;-webkit-text-stroke:0.25px #101010">BallMills</div><div class="a" style="left:54px;top:506.6px;width:9px;height:21px;border-radius:5px 5px 4px 4px;background:repeating-linear-gradient(60deg,#f4f4f4 0 2px,#7a7a7a 2px 4px);opacity:.9"></div><div class="t" style="left:77px;top:509.5px;font-size:15.5px;font-family:'Liberation Serif',serif;color:#101010;-webkit-text-stroke:0.25px #101010">BallInch-B-R0.00-T10.0-F0.1</div><div class="t" style="left:43px;top:531.5px;font-size:15.5px;font-family:'Liberation Serif',serif;color:#101010;-webkit-text-stroke:0.25px #101010">VBits</div><svg class="a" style="left:23px;top:551.1px" width="16" height="16" viewBox="0 0 16 16"><rect width="16" height="16" fill="#fff"/><path d="M5 1.5h6l3.5 3.5v6L11 14.5H5L1.5 11V5z" fill="none" stroke="#000" stroke-width="2"/><path d="M2 8h12" stroke="#000" stroke-width="2"/></svg><div class="t" style="left:43px;top:553.5px;font-size:15.5px;font-family:'Liberation Serif',serif;color:#101010;-webkit-text-stroke:0.25px #101010">SlitSaws</div><div class="a" style="left:43px;top:573.5px;width:181px;height:22px;background:#464d54"></div><div class="t" style="left:47px;top:575.5px;font-size:15.5px;font-family:'Liberation Serif',serif;color:#101010;-webkit-text-stroke:0.25px #101010">VInch-V-R0.00-T18.0-F0.0</div><div class="a" style="left:0;top:619px;width:259px;height:22px;background:#f0f0f0;border-top:1px solid #e8e8e8"></div><div class="a" style="left:24.5px;top:620px;width:184px;height:19px;border:1px solid #9a9a9a;border-radius:2px;background:linear-gradient(#f4f4f4,#e4e4e4 50%,#d4d4d4)"></div><svg class="a" style="left:111px;top:623px" width="8" height="10"><path d="M1.5 1v8M4 1v8M6.5 1v8" stroke="#606060" stroke-width="1"/></svg><svg class="a" style="left:7px;top:625px" width="8" height="10"><path d="M6 1L2 5l4 4z" fill="#404040"/></svg><svg class="a" style="left:244px;top:625px" width="8" height="10"><path d="M2 1l4 4-4 4z" fill="#404040"/></svg></div>
<div class="t" style="left:910.5px;top:220.7px;font-size:13px;color:#000;">Tool</div>
<div class="a" style="left:906px;top:245.5px;width:167px;height:23.0px;background:#fff;border:1px solid #e2e3e5;border-top-color:#c8c9cc;font-size:13px;line-height:21.0px;padding-left:5px;color:#000;white-space:nowrap;overflow:hidden">SlitSaw</div>
<svg class="a" style="left:1059px;top:254px" width="10" height="6"><path d="M0 0h10L5 6z" fill="#000"/></svg><div class="a" style="left:880px;top:294px;width:200px;height:62px;border:1px solid #dcdcdc;border-radius:3px;box-shadow:inset 1px 1px 0 #fff,1px 1px 0 #fff"></div>
<div class="a" style="left:884px;top:285px;width:58px;height:16px;background:#f0f0f0"></div><div class="t" style="left:887px;top:286.6px;font-size:13px;color:#000;">Tool Ops</div>
<div class="t" style="left:912px;top:305.0px;font-size:13px;color:#000;">Diam</div>
<div class="t" style="left:962px;top:304.0px;font-size:13px;color:#000;">Depth Per Pass</div>
<div class="a" style="left:901.5px;top:323.5px;width:50.0px;height:22.0px;background:#fff;border:1px solid #e2e3e5;border-top-color:#c8c9cc;font-size:13px;line-height:20.0px;padding-left:4px;color:#000;white-space:nowrap;overflow:hidden">3</div>
<div class="a" style="left:973.5px;top:323.5px;width:50.0px;height:22.0px;background:#fff;border:1px solid #e2e3e5;border-top-color:#c8c9cc;font-size:13px;line-height:20.0px;padding-left:5px;color:#000;white-space:nowrap;overflow:hidden">0.06</div>
<div class="a" style="left:1036px;top:325px;width:22px;height:20px;overflow:hidden"><div class="t" style="left:0;top:5px;font-size:13px;color:#000">inches</div></div>
<div class="a" style="left:880px;top:371.5px;width:202px;height:59.5px;border:1px solid #dcdcdc;border-radius:3px;box-shadow:inset 1px 1px 0 #fff,1px 1px 0 #fff"></div>
<div class="a" style="left:884px;top:362px;width:58px;height:16px;background:#f0f0f0"></div><div class="t" style="left:887px;top:365.3px;font-size:13px;color:#000;">Stepover</div>
<div class="a" style="left:901.5px;top:393px;width:50.0px;height:23px;background:#fff;border:1px solid #e2e3e5;border-top-color:#c8c9cc;font-size:13px;line-height:21px;padding-left:5px;color:#000;white-space:nowrap;overflow:hidden">0.017</div>
<div class="t" style="left:959.5px;top:399.0px;font-size:13px;color:#000;">inches</div>
<div class="a" style="left:1008px;top:393px;width:50.5px;height:23px;background:#fff;border:1px solid #e2e3e5;border-top-color:#c8c9cc;font-size:13px;line-height:21px;padding-left:4px;color:#000;white-space:nowrap;overflow:hidden">0.56666</div>
<div class="t" style="left:1062.5px;top:399.0px;font-size:13px;color:#000;">%</div>
<div class="t" style="left:910.5px;top:445.6px;font-size:13px;color:#000;">Taper</div>
<div class="t" style="left:996.6px;top:446.8px;font-size:13px;color:#000;">Flute length</div>
<div class="a" style="left:905.5px;top:469.5px;width:64.0px;height:22.5px;background:#fff;border:1px solid #e2e3e5;border-top-color:#c8c9cc;font-size:13px;line-height:20.5px;padding-left:4px;color:#000;white-space:nowrap;overflow:hidden">0</div>
<div class="a" style="left:996.5px;top:469.5px;width:59.0px;height:22.5px;background:#fff;border:1px solid #e2e3e5;border-top-color:#c8c9cc;font-size:13px;line-height:20.5px;padding-left:5px;color:#000;white-space:nowrap;overflow:hidden">0.02</div>
<div class="t" style="left:910.5px;top:502.8px;font-size:13px;color:#000;">Bottom Flat</div>
<div class="a" style="left:905.5px;top:523px;width:59.0px;height:23px;background:#fff;border:1px solid #7da2ce;border-top-color:#5d8ac0;font-size:13px;line-height:21px;padding-left:4px;color:#000;white-space:nowrap;overflow:hidden">1.5</div>
<div class="a" style="left:997px;top:529px;width:16px;height:16px;border:1px solid #8e8f8f;background:linear-gradient(135deg,#d8d8d8,#f8f8f8);box-shadow:inset 0 0 0 2px #f4f4f4"></div>
<div class="t" style="left:1016.7px;top:531.3px;font-size:13px;color:#000;">Metric</div>
<div class="t" style="left:910.5px;top:556.7px;font-size:13px;color:#000;">Radius</div>
<div class="a" style="left:905.5px;top:577px;width:64.0px;height:23px;background:#fff;border:1px solid #e2e3e5;border-top-color:#c8c9cc;font-size:13px;line-height:21px;padding-left:4px;color:#000;white-space:nowrap;overflow:hidden">0</div>
<div class="a" style="left:992.5px;top:571.5px;width:102.0px;height:48.0px;border:1px solid #dcdcdc;border-radius:3px;box-shadow:inset 1px 1px 0 #fff,1px 1px 0 #fff"></div>
<div class="a" style="left:998px;top:562px;width:82px;height:16px;background:#f0f0f0"></div><div class="t" style="left:1001.7px;top:564.8px;font-size:13px;color:#000;">Favorites List</div>
<div class="a" style="left:1010px;top:591px;width:16px;height:16px;border:1px solid #8e8f8f;background:linear-gradient(135deg,#d8d8d8,#f8f8f8);box-shadow:inset 0 0 0 2px #f4f4f4"></div>
<div class="t" style="left:1029.4px;top:592.6px;font-size:13px;color:#000;">Included</div>
<div class="t" style="left:898.2px;top:638.7px;font-size:13px;color:#000;">Spindle</div>
<div class="t" style="left:1017.4px;top:638.7px;font-size:13px;color:#000;">Feedrate</div>
<div class="a" style="left:898.5px;top:661px;width:80.5px;height:23.5px;background:#fff;border:1px solid #e2e3e5;border-top-color:#c8c9cc;font-size:13px;line-height:21.5px;padding-left:4px;color:#000;white-space:nowrap;overflow:hidden">1750</div>
<div class="a" style="left:999.5px;top:661px;width:81.0px;height:23.5px;background:#fff;border:1px solid #e2e3e5;border-top-color:#c8c9cc;font-size:13px;line-height:21.5px;padding-left:5px;color:#000;white-space:nowrap;overflow:hidden">10</div>
<div class="t" style="left:1123.4px;top:672.7px;font-size:13px;color:#000;">Units</div>
<div class="a" style="left:1097.5px;top:691px;width:82.5px;height:23px;background:#fff;border:1px solid #e2e3e5;border-top-color:#c8c9cc;font-size:13px;line-height:21px;padding-left:5px;color:#000;white-space:nowrap;overflow:hidden">in/min</div>
<svg class="a" style="left:1165px;top:700px" width="10" height="6"><path d="M0 0h10L5 6z" fill="#000"/></svg><div class="t" style="left:891.2px;top:697.0px;font-size:13px;color:#000;">GCode Tool</div>
<div class="t" style="left:1011px;top:698.9px;font-size:13px;color:#000;">Plungerate</div>
<div class="a" style="left:922.5px;top:717.5px;width:32.0px;height:26.5px;background:#fff;border:1px solid #e2e3e5;border-top-color:#c8c9cc;font-size:13px;line-height:24.5px;padding-left:4px;color:#000;white-space:nowrap;overflow:hidden">7</div>
<div class="a" style="left:958px;top:718px;width:19px;height:12px;border:1px solid #b8bcc4;background:linear-gradient(#f4f6fa,#dde2ea)"></div><svg class="a" style="left:963px;top:721px" width="9" height="6"><path d="M0 5h9L4.5 0z" fill="#4a5a80"/></svg><div class="a" style="left:958px;top:731px;width:19px;height:13px;border:1px solid #b8bcc4;background:linear-gradient(#f4f6fa,#dde2ea)"></div><svg class="a" style="left:963px;top:735px" width="9" height="6"><path d="M0 0h9L4.5 5z" fill="#4a5a80"/></svg>
<div class="a" style="left:999.5px;top:721.5px;width:81.0px;height:22.5px;background:#fff;border:1px solid #e2e3e5;border-top-color:#c8c9cc;font-size:13px;line-height:20.5px;padding-left:5px;color:#000;white-space:nowrap;overflow:hidden">10</div>
<div class="a" style="left:898px;top:762px;width:197px;height:77.5px;border:1px solid #dcdcdc;border-radius:3px;box-shadow:inset 1px 1px 0 #fff,1px 1px 0 #fff"></div>
<div class="a" style="left:904px;top:753px;width:116px;height:16px;background:#f0f0f0"></div><div class="t" style="left:907.5px;top:754.4px;font-size:13px;color:#000;">Toolbox operations</div>
<div class="a" style="left:902.5px;top:774.5px;width:85.5px;height:25.0px;border:1px solid #707070;border-radius:3px;background:linear-gradient(#f2f2f2 0,#ebebeb 50%,#dddddd 51%,#cfcfcf 100%);box-shadow:inset 0 0 0 1px #fafafa;font-size:13px;text-align:center;line-height:23.0px;color:#000">Import</div>
<div class="a" style="left:995.5px;top:774.5px;width:85.5px;height:25.0px;border:1px solid #707070;border-radius:3px;background:linear-gradient(#f2f2f2 0,#ebebeb 50%,#dddddd 51%,#cfcfcf 100%);box-shadow:inset 0 0 0 1px #fafafa;font-size:13px;text-align:center;line-height:23.0px;color:#000">Export</div>
<div class="a" style="left:902.5px;top:808px;width:85.5px;height:26px;border:1px solid #707070;border-radius:3px;background:linear-gradient(#f2f2f2 0,#ebebeb 50%,#dddddd 51%,#cfcfcf 100%);box-shadow:inset 0 0 0 1px #fafafa;font-size:13px;text-align:center;line-height:24px;color:#000">Delete</div>
<div class="t" style="left:1172px;top:199.4px;font-size:13px;color:#000;">Name</div>
<div class="a" style="left:1134.5px;top:216.5px;width:205.5px;height:25.0px;background:#fff;border:1px solid #e2e3e5;border-top-color:#c8c9cc;font-size:13px;line-height:23.0px;padding-left:5px;color:#000;white-space:nowrap;overflow:hidden">VInch-V-R0.00-T18.0-F0.0</div>
<svg class="a" style="left:1108px;top:253px" width="228" height="308" viewBox="1108 253 228 308">
<defs><linearGradient id="pg" x1="0" y1="0" x2="0" y2="1"><stop offset="0" stop-color="#4c5a94"/><stop offset="0.45" stop-color="#6c82a0"/><stop offset="1" stop-color="#9abc98"/></linearGradient></defs>
<rect x="1108" y="253" width="228" height="308" fill="url(#pg)"/>
<ellipse cx="1222" cy="406.5" rx="122" ry="85" transform="rotate(45 1222 406.5)" fill="#18aa1a"/>
<path d="M1221 405L1346 283" stroke="#2ac42a" stroke-width="20" stroke-linecap="round"/>
<path d="M1221 405L1346 283" stroke="#17a018" stroke-width="13" stroke-linecap="round"/>
</svg>
<div class="a" style="left:1247.5px;top:756.5px;width:85.5px;height:25.5px;border:1px solid #707070;border-radius:3px;background:linear-gradient(#f2f2f2 0,#ebebeb 50%,#dddddd 51%,#cfcfcf 100%);box-shadow:inset 0 0 0 1px #fafafa;font-size:13px;text-align:center;line-height:23.5px;color:#000">Cancel</div>
<div class="a" style="left:1151px;top:799px;width:82px;height:30.5px;border:1px solid #707070;border-radius:3px;background:linear-gradient(#f2f2f2 0,#ebebeb 50%,#dddddd 51%,#cfcfcf 100%);box-shadow:inset 0 0 0 1px #fafafa;font-size:13px;text-align:center;line-height:28.5px;color:#000">Apply</div>
<div class="a" style="left:1247.5px;top:799px;width:85.5px;height:30.5px;border:1px solid #707070;border-radius:3px;background:linear-gradient(#f2f2f2 0,#ebebeb 50%,#dddddd 51%,#cfcfcf 100%);box-shadow:inset 0 0 0 1px #fafafa;font-size:13px;text-align:center;line-height:28.5px;color:#000">OK</div>
<svg class="a" style="left:1224px;top:576px" width="14" height="22" viewBox="0 0 14 22"><path d="M1 1v17l4-4 3 7 3-1-3-7h5z" fill="#fff" stroke="#000" stroke-width="1"/></svg>
<div id="taskbar" class="a"></div>
<div class="a" style="left:142px;top:1033px;width:66px;height:47px;border:1px solid #5a6a7c;border-radius:3px;background:linear-gradient(#d4e0ec,#b8cce0 50%,#a8bed6);box-shadow:inset 0 0 0 1px rgba(255,255,255,.5)"></div>
<div class="a" style="left:211px;top:1033px;width:67px;height:47px;border:1px solid #5a6a7c;border-radius:3px;background:linear-gradient(#d4e0ec,#b8cce0 50%,#a8bed6);box-shadow:inset 0 0 0 1px rgba(255,255,255,.5)"></div>
<div class="a" style="left:562px;top:1033px;width:66px;height:47px;border:1px solid #5a6a7c;border-radius:3px;background:linear-gradient(#d4e0ec,#b8cce0 50%,#a8bed6);box-shadow:inset 0 0 0 1px rgba(255,255,255,.5)"></div>
<div class="a" style="left:842px;top:1033px;width:66px;height:47px;border:1px solid #5a6a7c;border-radius:3px;background:linear-gradient(#d4e0ec,#b8cce0 50%,#a8bed6);box-shadow:inset 0 0 0 1px rgba(255,255,255,.5)"></div>
<div class="a" style="left:912px;top:1033px;width:66px;height:47px;border:1px solid #5a6a7c;border-radius:3px;background:linear-gradient(#d4e0ec,#b8cce0 50%,#a8bed6);box-shadow:inset 0 0 0 1px rgba(255,255,255,.5)"></div>
<svg class="a" style="left:13px;top:1035px" width="42" height="42" viewBox="0 0 42 42">
<defs><radialGradient id="so" cx=".5" cy=".9" r=".75"><stop offset="0" stop-color="#30e8ff"/><stop offset=".45" stop-color="#1a90d0"/><stop offset=".85" stop-color="#0c4c88"/><stop offset="1" stop-color="#0a3060"/></radialGradient></defs>
<circle cx="21" cy="21" r="19" fill="url(#so)" stroke="#1a3450" stroke-width="1.5"/>
<path d="M11 13q4-3 9 0v7q-5-3-9 0z" fill="#f04a20"/><path d="M22 13q5 3 10 0v7q-5 3-10 0z" fill="#80c030"/>
<path d="M11 22q4-3 9 0v7q-5-3-9 0z" fill="#3aa0f0"/><path d="M22 22q5 3 10 0v7q-5 3-10 0z" fill="#f8c020"/>
<ellipse cx="21" cy="12" rx="13" ry="7" fill="#fff" opacity=".25"/></svg>
<svg class="a" style="left:85px;top:1037px" width="40" height="38" viewBox="0 0 40 38">
<path d="M2 4h12l3 3h19v28H2z" fill="#e8c860"/><rect x="2" y="9" width="36" height="26" fill="#f8e498"/>
<path d="M6 6h6M20 6h10" stroke="#a08030" stroke-width="2"/>
<path d="M6 36V26h28v10h-6v-5H12v5z" fill="#4aa8e0"/><path d="M6 26h28v3H6z" fill="#80d0f8"/></svg>
<svg class="a" style="left:155px;top:1037px" width="38" height="38" viewBox="0 0 38 38">
<rect x="1" y="2" width="36" height="34" fill="#f8d480"/><rect x="1" y="2" width="36" height="34" fill="none" stroke="#e0a040"/>
<ellipse cx="12" cy="15" rx="7" ry="10" fill="none" stroke="#f08010" stroke-width="5"/>
<circle cx="29" cy="15" r="6" fill="#fff4d8" stroke="#e09830" stroke-width="1.5"/><path d="M18 24l12-4 6 12-12 4z" fill="#fff8e8" stroke="#e0b060"/></svg>
<svg class="a" style="left:226px;top:1037px" width="38" height="38" viewBox="0 0 38 38">
<circle cx="19" cy="19" r="18" fill="#db4437"/>
<path d="M19 19L3.4 10A18 18 0 0 0 19 37z" fill="#0f9d58"/><path d="M19 19L19 37A18 18 0 0 0 34.6 10z" fill="#ffcd40"/>
<path d="M19 19L34.6 10A18 18 0 0 0 3.4 10z" fill="#db4437"/>
<circle cx="19" cy="19" r="8" fill="#fff"/><circle cx="19" cy="19" r="6.3" fill="#4285f4"/></svg>
<svg class="a" style="left:294px;top:1034px" width="46" height="44" viewBox="0 0 46 44">
<defs><linearGradient id="ieg" x1="0" y1="0" x2="0" y2="1"><stop offset="0" stop-color="#70d0f8"/><stop offset="1" stop-color="#1a90e0"/></linearGradient></defs>
<path d="M23 5A17 17 0 1 0 39.5 26H32A10 10 0 0 1 14 24H40A17 17 0 0 0 23 5ZM14.5 18A9 9 0 0 1 31.5 18Z" fill="url(#ieg)" fill-rule="evenodd" stroke="#1a70b8" stroke-width=".6"/>
<path d="M4 40Q-1 34 10 20Q24 4 38 3Q44 3 40 10" fill="none" stroke="#f8c820" stroke-width="3"/></svg>

<svg class="a" style="left:364px;top:1035px" width="42" height="42" viewBox="0 0 42 42">
<defs><radialGradient id="rg364" cx=".4" cy=".4" r=".7"><stop offset="0" stop-color="#fff0a0"/><stop offset=".6" stop-color="#f8c030"/><stop offset="1" stop-color="#e89010"/></radialGradient></defs>
<path d="M21 2A19 19 0 0 0 3 24Q4 36 14 39H38V22A19 19 0 0 0 21 2z" fill="url(#rg364)" stroke="#b87010" stroke-width="1.2"/>
<path d="M28 28h8v10h-8zM22 32h6v6h-6z" fill="#f0b040" opacity=".8"/>
<path d="M18 5l5 1-1 6 8 5-2 3-6-3-2 7 5 8-3 2-6-8-3 6-5 6-2-2 5-8 3-10-3-4z" fill="#f06818"/>
<rect x="6" y="13" width="6" height="6" fill="#209040"/></svg>

<svg class="a" style="left:434px;top:1035px" width="42" height="42" viewBox="0 0 42 42">
<defs><radialGradient id="rg434" cx=".4" cy=".4" r=".7"><stop offset="0" stop-color="#fff0a0"/><stop offset=".6" stop-color="#f8c030"/><stop offset="1" stop-color="#e89010"/></radialGradient></defs>
<path d="M21 2A19 19 0 0 0 3 24Q4 36 14 39H38V22A19 19 0 0 0 21 2z" fill="url(#rg434)" stroke="#b87010" stroke-width="1.2"/>
<path d="M28 28h8v10h-8zM22 32h6v6h-6z" fill="#f0b040" opacity=".8"/>
<path d="M18 5l5 1-1 6 8 5-2 3-6-3-2 7 5 8-3 2-6-8-3 6-5 6-2-2 5-8 3-10-3-4z" fill="#f06818"/>
<rect x="6" y="13" width="6" height="6" fill="#209040"/></svg>

<svg class="a" style="left:506px;top:1036px" width="36" height="40" viewBox="0 0 36 40">
<path d="M18 1Q30 1 34 5V22Q34 34 18 39Q2 34 2 22V5Q6 1 18 1z" fill="#5a3418" stroke="#c89028" stroke-width="1.5"/>
<path d="M5 12Q18 2 31 8" stroke="#e0a830" stroke-width="2" fill="none"/>
<text x="18" y="29" font-family="Liberation Sans" font-weight="bold" font-size="14" fill="#f0b030" text-anchor="middle">ups</text></svg>
<svg class="a" style="left:574px;top:1036px" width="40" height="40" viewBox="0 0 40 40">
<rect x="0" y="0" width="40" height="40" fill="#ffff10"/>
<path d="M4 4l8 12 8-4 8 4 8-12M8 24h8M24 24h8M6 30l10-2M24 28l10 2M14 34h12" stroke="#000" stroke-width="1.5" fill="none"/>
<path d="M24 22l7-2 7 2v8q0 6-7 9q-7-3-7-9z" fill="#3a7ad8"/><path d="M31 20v19M24 29h14" stroke="#f8d040" stroke-width="3"/></svg>
<svg class="a" style="left:645px;top:1036px" width="40" height="40" viewBox="0 0 40 40">
<defs><radialGradient id="ffg" cx=".6" cy=".35" r=".5"><stop offset="0" stop-color="#3aa0e8"/><stop offset="1" stop-color="#1a3c90"/></radialGradient></defs>
<circle cx="21" cy="18" r="14" fill="url(#ffg)"/>
<path d="M6 12Q2 22 8 31Q15 39 25 37Q35 34 37 24Q38 14 33 8Q36 18 30 25Q24 31 16 28Q10 25 12 19Q8 22 9 16Q10 10 14 7Q8 8 6 12z" fill="#f26522"/>
<path d="M10 30Q18 37 28 34Q35 30 36 22Q32 30 24 31Q15 32 10 30z" fill="#f8a020"/>
<path d="M14 7Q18 4 24 5Q18 8 17 12Q13 10 14 7z" fill="#f4a030"/></svg>

<svg class="a" style="left:714px;top:1040px" width="36" height="36" viewBox="0 0 36 36">
<rect x="6" y="3" width="26" height="30" fill="#c8e4f4" stroke="#90c0e0"/><rect x="2" y="2" width="27" height="31" fill="#7cc0ea" stroke="#5aa0d0"/>
<rect x="4" y="4" width="23" height="27" fill="#a0d4f4"/>
<circle cx="15" cy="17" r="10" fill="#f07818"/><circle cx="15" cy="17" r="8" fill="#f8901c"/><path d="M12 11v12l9-6z" fill="#fff"/></svg>

<svg class="a" style="left:784px;top:1038px" width="40" height="36" viewBox="0 0 40 36">
<path d="M14 3L36 6L38 32L30 34L10 28z" fill="#f4f8fc" stroke="#a8b8c8" stroke-width=".8"/>
<path d="M14 3L30 5L28 33L2 27z" fill="#6cb8e0"/><path d="M14 3L30 5L29 14L8 10z" fill="#a8d8f0" opacity=".6"/>
<path d="M31 8l5 1M31 12l5 1M31 16l5 1M30 20l6 1M30 24l6 1" stroke="#c0ccd8" stroke-width=".8"/>
<path d="M15 2l15 2" stroke="#606870" stroke-width="2" stroke-dasharray="1 1.5"/></svg>

<svg class="a" style="left:855px;top:1036px" width="40" height="40" viewBox="0 0 40 40">
<circle cx="20" cy="19" r="19" fill="#141414"/><circle cx="20" cy="19" r="14" fill="#3a3a3a" stroke="#707070" stroke-width="1.5"/>
<path d="M20 7L11 30M20 7L29 30" stroke="#c81818" stroke-width="4"/><path d="M7 19h26" stroke="#888" stroke-width="1.5"/>
<path d="M8 7h24" stroke="#888" stroke-width="1.2" stroke-dasharray="1.5 1.5"/></svg>

<svg class="a" style="left:924px;top:1040px" width="42" height="32" viewBox="0 0 42 32">
<rect x="0" y="0" width="41" height="32" fill="#fbfbfb"/>
<circle cx="23" cy="15" r="14" fill="#1830e8" stroke="#1830e8" stroke-width="3" stroke-dasharray="2.2 2"/>
<circle cx="23" cy="15" r="9" fill="#4060f0"/><path d="M18 15q5-6 10 0q-5 6-10 0z" fill="none" stroke="#e0e8ff" stroke-width="1.5"/><circle cx="23" cy="15" r="2" fill="#e0e8ff"/>
<text x="1" y="31" font-family="Liberation Sans" font-weight="bold" font-style="italic" font-size="11" fill="#c84010">3.x</text></svg>

<svg class="a" style="left:1730px;top:1052px" width="14" height="8"><path d="M1 7l6-6 6 6z" fill="#f4f4f4"/></svg><svg class="a" style="left:1760px;top:1046px" width="20" height="22" viewBox="0 0 20 22"><path d="M2 1v20" stroke="#f4f4f4" stroke-width="2"/><path d="M3 2q5-2 9 2q3 2 6 1v6q-3 1-6-1q-4-4-9-2z" fill="#f8f8f8"/></svg><svg class="a" style="left:1788px;top:1047px" width="22" height="21" viewBox="0 0 22 21"><rect x="6" y="3" width="14" height="11" fill="#484f58" stroke="#f0f0f0" stroke-width="1.5"/><path d="M9 18h8M13 14v4" stroke="#f0f0f0" stroke-width="2"/><rect x="1" y="1" width="4" height="7" fill="none" stroke="#f0f0f0" stroke-width="1.5"/><path d="M3 8v11" stroke="#f0f0f0" stroke-width="1.5"/></svg><div class="t" style="left:1834px;top:1039.2px;font-size:14.5px;color:#f4f6fa;">8:42 AM</div>
<div class="t" style="left:1828px;top:1060.3px;font-size:15px;color:#f4f6fa;">6/19/2017</div>
<div class="a" style="left:1905px;top:1033px;width:15px;height:47px;border:1px solid #b8c4d0;border-right:none;background:linear-gradient(90deg,#7890a8,#6a8098)"></div></body></html>
